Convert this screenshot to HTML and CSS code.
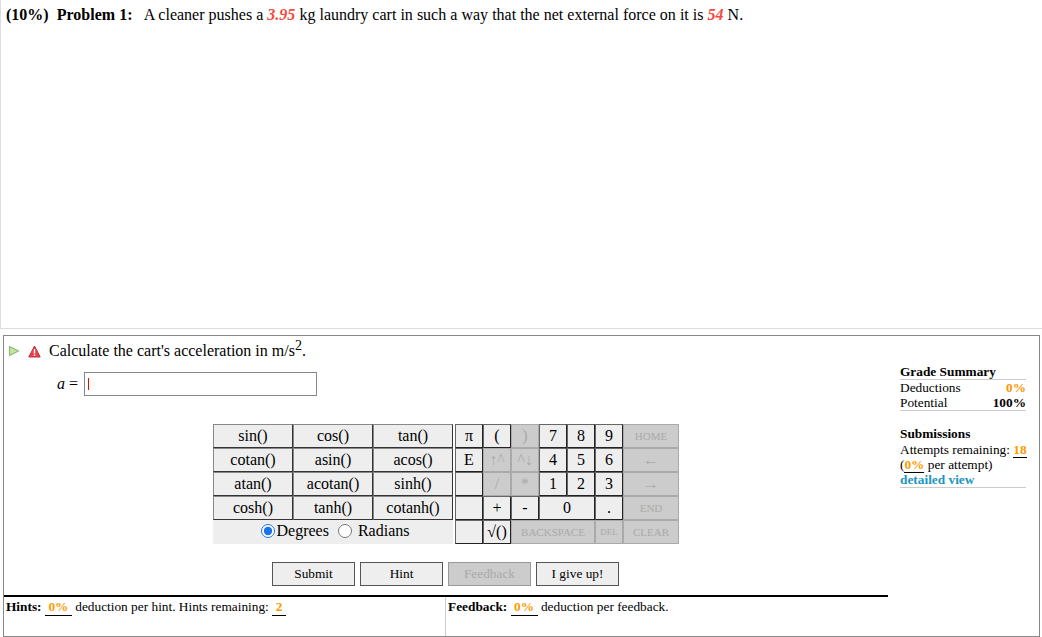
FILE: index.html
```html
<!DOCTYPE html>
<html lang="en">
<head>
  <meta charset="UTF-8">
  <title>Problem 1</title>
  <link rel="stylesheet" href="styles.css">
</head>
<body>

  <div class="problem">
    <b class="weight">(10%)</b>
    <b class="number">Problem 1:</b>
    A cleaner pushes a <i class="given">3.95</i> kg laundry cart in such a way that the net external force on it is <i class="given">54</i> N.
  </div>

  <div class="part">
    <div class="main">
      <div class="question">
        <svg class="icon" width="12" height="12" viewBox="0 0 12 12">
          <path d="M1.5 1.5 L10.5 6 L1.5 10.5 Z" fill="#c4e89c" stroke="#8fb878" stroke-width="1.2" stroke-linejoin="round"/>
        </svg>
        <svg class="icon warn" width="13" height="13" viewBox="0 0 13 13">
          <path d="M6.5 1 L12.2 12 L0.8 12 Z" fill="#e8434b" stroke="#b8323a" stroke-width="1" stroke-linejoin="round"/>
          <path d="M6.5 4 V8.5 M6.5 9.6 V11" stroke="#fff" stroke-width="1.4"/>
        </svg>
        <span>Calculate the cart's acceleration in m/s<sup>2</sup>.</span>
      </div>

      <div class="answer">
        <label><i>a</i> =</label>
        <div class="field"><span class="caret"></span></div>
      </div>

      <div class="calc">
        <div class="funcs">
          <button class="key">sin()</button>
          <button class="key">cos()</button>
          <button class="key">tan()</button>
          <button class="key">cotan()</button>
          <button class="key">asin()</button>
          <button class="key">acos()</button>
          <button class="key">atan()</button>
          <button class="key">acotan()</button>
          <button class="key">sinh()</button>
          <button class="key">cosh()</button>
          <button class="key">tanh()</button>
          <button class="key">cotanh()</button>
          <div class="units">
            <input type="radio" name="unit" checked><span class="deg">Degrees</span>
            <input type="radio" name="unit"><span class="rad">Radians</span>
          </div>
        </div>

        <div class="pad">
          <button class="key dark">π</button>
          <button class="key dark">(</button>
          <button class="key off">)</button>
          <button class="key dark">7</button>
          <button class="key dark">8</button>
          <button class="key dark">9</button>
          <button class="key off small">HOME</button>

          <button class="key dark">E</button>
          <button class="key off">↑^</button>
          <button class="key off">^↓</button>
          <button class="key dark">4</button>
          <button class="key dark">5</button>
          <button class="key dark">6</button>
          <button class="key off">←</button>

          <button class="key dark"></button>
          <button class="key off">/</button>
          <button class="key off">*</button>
          <button class="key dark">1</button>
          <button class="key dark">2</button>
          <button class="key dark">3</button>
          <button class="key off">→</button>

          <button class="key dark"></button>
          <button class="key dark">+</button>
          <button class="key dark">-</button>
          <button class="key dark span2">0</button>
          <button class="key dark">.</button>
          <button class="key off small">END</button>

          <button class="key dark"></button>
          <button class="key dark">√()</button>
          <button class="key off small span3">BACKSPACE</button>
          <button class="key off tiny">DEL</button>
          <button class="key off small">CLEAR</button>
        </div>
      </div>

      <div class="actions">
        <button class="action">Submit</button>
        <button class="action">Hint</button>
        <button class="action off">Feedback</button>
        <button class="action">I give up!</button>
      </div>

      <div class="notes">
        <div class="note"><b>Hints:</b> <span class="blank">0%</span> deduction per hint. Hints remaining: <span class="blank short">2</span></div>
        <div class="note second"><b>Feedback:</b> <span class="blank">0%</span> deduction per feedback.</div>
      </div>
    </div>

    <div class="side">
      <h4>Grade Summary</h4>
      <div class="summary">
        <div class="line"><span>Deductions</span><b class="orange">0%</b></div>
        <div class="line"><span>Potential</span><b>100%</b></div>
      </div>
      <h4 class="subs">Submissions</h4>
      <div class="summary attempts">
        Attempts remaining: <b class="orange under">18</b><br>
        (<b class="orange under">0%</b> per attempt)<br>
        <b class="link">detailed view</b>
      </div>
    </div>
  </div>

</body>
</html>
```

FILE: styles.css
```css
* {
  box-sizing: border-box;
}

body {
  margin: 0;
  font-family: "Liberation Serif", "Times New Roman", serif;
  font-size: 14px;
  color: #000;
  background: #fff;
}

.problem {
  height: 329px;
  padding: 6px 0 0 5px;
  border-left: 1px solid #ddd;
  border-bottom: 1px solid #ddd;
  font-size: 16px;
  line-height: 18px;
  word-spacing: 0.05px;
}

.weight {
  margin-right: 4px;
}

.number {
  margin-right: 8px;
}

.given {
  color: #f4493c;
  font-weight: bold;
}

.part {
  display: flex;
  height: 302px;
  margin: 6px 2px 0 3px;
  border: 1px solid #888;
}

.main {
  width: 884px;
  display: flex;
  flex-direction: column;
}

.question {
  display: flex;
  align-items: center;
  height: 29px;
  padding: 1px 0 0 4px;
  font-size: 16px;
}

.question .warn {
  margin-left: 8px;
  margin-right: 8px;
}

.question sup {
  font-size: 14px;
  line-height: 0;
}

.answer {
  display: flex;
  align-items: center;
  margin-top: 7px;
  font-size: 16px;
}

.answer label {
  width: 80px;
  padding-right: 6px;
  text-align: right;
}

.field {
  display: flex;
  align-items: center;
  width: 233px;
  height: 24px;
  padding-left: 3px;
  border: 1px solid #888;
}

.caret {
  width: 1px;
  height: 12px;
  background: #f00;
}

.calc {
  display: flex;
  gap: 2px;
  margin: 28px 0 0 209px;
}

.funcs {
  display: grid;
  grid-template-columns: repeat(3, 80px);
  grid-auto-rows: 24px;
}

.pad {
  display: grid;
  grid-template-columns: repeat(6, 28px) 56px;
  grid-auto-rows: 24px;
}

.key {
  padding: 0;
  font-family: inherit;
  font-size: 16px;
  color: #000;
  background: #eee;
  border: 1px solid;
  border-color: #888 #333 #333 #888;
}

.key.dark {
  border-color: #666 #222 #222 #666;
}

.key.off {
  color: #aaa;
  background: #ccc;
  border-color: #aaa;
}

.key.small {
  font-size: 11px;
}

.key.tiny {
  font-size: 9px;
}

.span2 {
  grid-column: span 2;
}

.span3 {
  grid-column: span 3;
}

.units {
  grid-column: span 3;
  display: flex;
  align-items: center;
  justify-content: center;
  padding: 0 0 2px 4px;
  background: #eee;
  font-size: 16px;
}

.units input {
  width: 14px;
  height: 14px;
  margin: 0;
  accent-color: #1a73e8;
}

.units .deg {
  margin: 0 9px 0 2px;
}

.units .rad {
  margin-left: 6px;
}

.actions {
  display: flex;
  gap: 5px;
  margin: 18px 0 0 268px;
}

.action {
  width: 83px;
  height: 24px;
  padding: 0;
  font-family: inherit;
  font-size: 13.33px;
  color: #000;
  background: #eee;
  border: 1px solid #555;
}

.action.off {
  color: #aaa;
  background: #ccc;
  border-color: #999;
}

.notes {
  display: flex;
  flex: 1;
  margin-top: 9px;
  border-top: 2px solid #000;
}

.note {
  width: 441px;
  padding: 2px 0 0 2px;
  font-size: 13.33px;
  line-height: 16px;
}

.note.second {
  width: 443px;
  border-left: 1px solid #ccc;
}

.blank {
  display: inline-block;
  width: 27px;
  text-align: center;
  color: #f90;
  font-weight: bold;
  border-bottom: 1px solid #000;
}

.blank.short {
  width: 14px;
}

.side {
  width: 150px;
  padding: 28px 12px 0;
  font-size: 13.33px;
  line-height: 15px;
}

.side h4 {
  margin: 0;
  font-size: 13.33px;
  line-height: 15px;
  border-bottom: 1px solid #ccc;
}

.side .subs {
  margin-top: 15px;
  padding-bottom: 1px;
  border-bottom: 0;
}

.summary {
  border-bottom: 1px solid #ccc;
}

.attempts {
  white-space: nowrap;
}

.line {
  display: flex;
  justify-content: space-between;
}

.orange {
  color: #f90;
}

.under {
  border-bottom: 1px solid #000;
}

.link {
  color: #1b95c0;
}
```
